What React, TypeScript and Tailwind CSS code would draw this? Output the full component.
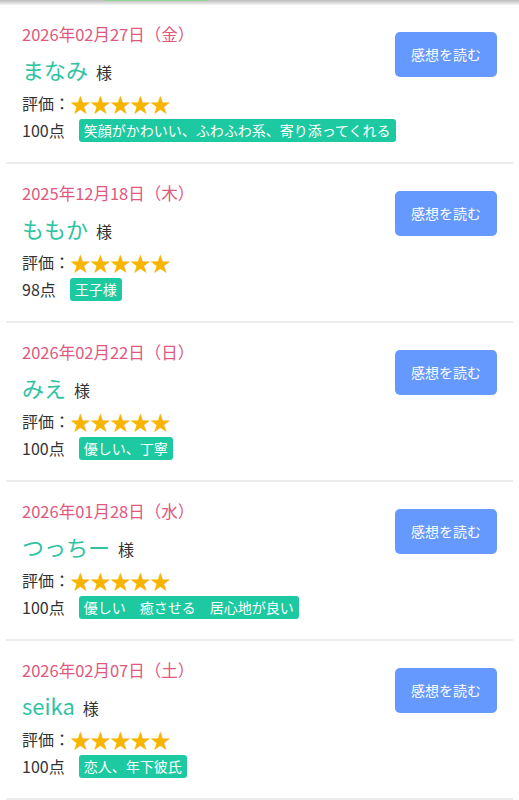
import React from "react";

type Review = {
  date: string;
  name: string;
  score: string;
  tags: string;
};

const reviews: Review[] = [
  { date: "2026年02月27日（金）", name: "まなみ", score: "100点", tags: "笑顔がかわいい、ふわふわ系、寄り添ってくれる" },
  { date: "2025年12月18日（木）", name: "ももか", score: "98点", tags: "王子様" },
  { date: "2026年02月22日（日）", name: "みえ", score: "100点", tags: "優しい、丁寧" },
  { date: "2026年01月28日（水）", name: "つっちー", score: "100点", tags: "優しい　癒させる　居心地が良い" },
  { date: "2026年02月07日（土）", name: "seika", score: "100点", tags: "恋人、年下彼氏" },
];

function ReviewCard({ review }: { review: Review }) {
  return (
    <div className="flex justify-between border-b-2 border-[#ececec] px-[16px] pt-[17px] pb-[20px]">
      <div className="flex min-w-0 flex-col whitespace-nowrap">
        <div className="text-[16.5px] leading-[24px] text-[#e0587e]">{review.date}</div>
        <div className="mt-[8px] flex items-baseline leading-[30px]">
          <span className="text-[22px] text-[#30c3a2]">{review.name}</span>
          <span className="ml-[8px] text-[16px] text-[#333]">様</span>
        </div>
        <div className="mt-[4px] flex items-center text-[16px] leading-[24px] text-[#333]">
          <span>評価：</span>
          <span className="text-[21px] leading-[24px] text-[#f7b500] tracking-[-1px]">★★★★★</span>
        </div>
        <div className="mt-[3px] flex items-center text-[16px] leading-[24px] text-[#333]">
          <span>{review.score}</span>
          <span className="ml-[14px] rounded-[3px] bg-[#1cc9a0] px-[5px] text-[14px] leading-[23px] text-white">
            {review.tags}
          </span>
        </div>
      </div>
      <button className="mt-[10px] h-[45px] w-[102px] shrink-0 rounded-[5px] bg-[#6699fd] text-[14px] text-white">
        感想を読む
      </button>
    </div>
  );
}

export default function App() {
  return (
    <div
      className="min-h-[800px] bg-white"
      style={{ fontFamily: '"Noto Sans CJK JP", "Noto Sans", sans-serif' }}
    >
      <div className="relative h-[5px] bg-gradient-to-b from-[#bdbdbd] to-[#f4f4f4]">
        <div className="absolute left-[105px] top-0 h-[1px] w-[102px] bg-[#8fd68f]" />
      </div>
      <div className="px-[6px]">
        {reviews.map((r) => (
          <ReviewCard key={r.date + r.name} review={r} />
        ))}
      </div>
    </div>
  );
}
